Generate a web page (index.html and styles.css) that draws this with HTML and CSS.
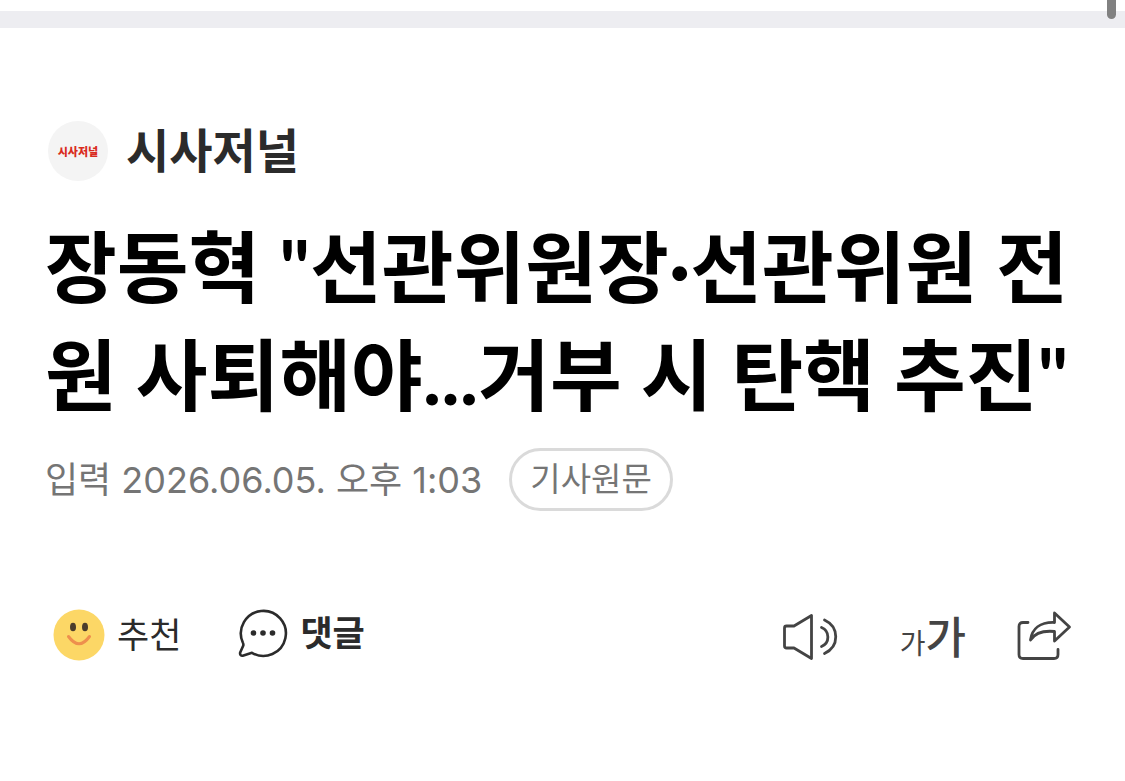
FILE: index.html
```html
<!DOCTYPE html>
<html lang="ko">
<head>
<meta charset="utf-8">
<meta name="viewport" content="width=device-width, initial-scale=1">
<title>시사저널</title>
<link rel="stylesheet" href="styles.css">
</head>
<body>
<div class="divider"></div>
<div class="scroll-thumb"></div>
<main class="article">
  <a class="press" href="#">
    <span class="press-logo">시사저널</span>
    <span class="press-name">시사저널</span>
  </a>
  <h1 class="headline">장동혁 "선관위원장·선관위원 전원 사퇴해야...거부 시 탄핵 추진"</h1>
  <div class="meta">
    <span class="date">입력 2026.06.05. 오후 1:03</span>
    <a class="origin" href="#">기사원문</a>
  </div>
  <div class="toolbar">
    <button class="tool like" type="button">
      <svg width="52" height="52" viewBox="0 0 52 52" aria-hidden="true">
        <circle cx="26" cy="26" r="25.5" fill="#fcd766"/>
        <ellipse cx="20" cy="18" rx="3" ry="4.3" fill="#4b3d2c"/>
        <ellipse cx="32" cy="18" rx="3" ry="4.3" fill="#4b3d2c"/>
        <path d="M15.500 27.500Q26 42 36.500 27.500" fill="none" stroke="#ee8f4d" stroke-width="3" stroke-linecap="round"/>
      </svg>
      <span class="tool-label">추천</span>
    </button>
    <button class="tool comment" type="button">
      <svg width="50" height="50" viewBox="0 0 50 50" aria-hidden="true">
        <path d="M4.800 34.500A22.500 22.500 0 1 1 14 44.800L5.500 47.500C3 48.300 1.500 46.500 2.300 44.300L5.300 37.500Q5.600 36 4.800 34.500Z" fill="none" stroke="#2b2b2b" stroke-width="2.600" stroke-linejoin="round"/>
        <circle cx="15.500" cy="25" r="2.800" fill="#2b2b2b"/>
        <circle cx="25" cy="25" r="2.800" fill="#2b2b2b"/>
        <circle cx="34.500" cy="25" r="2.800" fill="#2b2b2b"/>
      </svg>
      <span class="tool-label">댓글</span>
    </button>
    <div class="utils">
      <button class="tool listen" type="button" aria-label="음성으로 듣기">
        <svg width="56" height="48" viewBox="0 0 56 48" fill="none" stroke="#444" stroke-width="2.800" stroke-linecap="round" stroke-linejoin="round" aria-hidden="true">
          <path d="M29.500 2.500V45.500L12 35H4.500Q2.500 35 2.500 33V15Q2.500 13 4.500 13H12Z"/>
          <path d="M39.500 14.500C48 18 48 30 39.500 33.500"/>
          <path d="M42.500 7C57.500 14 57.500 33.500 42.500 40.500"/>
        </svg>
      </button>
      <button class="tool fontsize" type="button" aria-label="글자 크기 변경">
        <span class="ga-small">가</span><span class="ga-large">가</span>
      </button>
      <button class="tool share" type="button" aria-label="공유하기">
        <svg width="56" height="50" viewBox="0 0 56 50" fill="none" stroke="#444" stroke-width="2.800" stroke-linecap="round" stroke-linejoin="round" aria-hidden="true">
          <path d="M12 12.500H7Q3 12.500 3 16.500V44.500Q3 48.500 7 48.500H38Q42 48.500 42 44.500V39.500"/>
          <path d="M38.500 3L53.500 17L38.500 31V21.500C28 20.500 19 23 14.500 30C16 19 24 12 38.500 12.500Z"/>
        </svg>
      </button>
    </div>
  </div>
</main>
</body>
</html>
```
FILE: styles.css
```css
* {
  box-sizing: border-box;
}

body {
  margin: 0;
  padding-top: 11px;
  background: #fff;
  color: #2b2b2b;
  font-family: "Noto Sans CJK KR", sans-serif;
}

.divider {
  height: 17px;
  background: #ededf1;
}

.scroll-thumb {
  position: absolute;
  top: 0;
  right: 9px;
  width: 9px;
  height: 19px;
  border-radius: 0 0 5px 5px;
  background: #818181;
}

.article {
  padding: 92px 45px 0;
}

a {
  color: inherit;
  text-decoration: none;
}

.press {
  display: flex;
  align-items: flex-start;
  gap: 18px;
  padding-left: 3px;
}

.press-logo {
  display: flex;
  align-items: center;
  justify-content: center;
  width: 60px;
  height: 60px;
  margin-top: 1px;
  border-radius: 50%;
  background: #f4f4f4;
  color: #d92b20;
  font-size: 11px;
  font-weight: 900;
}

.press-name {
  font-size: 47px;
  font-weight: 700;
  line-height: 56px;
}

.headline {
  margin: 32px 0 0;
  color: #000;
  font-family: Lato, "Noto Sans CJK KR", sans-serif;
  font-size: 78px;
  font-weight: 700;
  line-height: 108px;
  word-break: break-all;
}

.meta {
  display: flex;
  align-items: center;
  gap: 27px;
  margin-top: 19px;
  color: #757575;
}

.date {
  font-family: Inter, "Noto Sans CJK KR", sans-serif;
  font-size: 36px;
  line-height: 62px;
}

.origin {
  padding: 0 18px 4px;
  border: 3px solid #dadada;
  border-radius: 32px;
  font-size: 33px;
  line-height: 53px;
}

.toolbar {
  display: flex;
  align-items: center;
  margin-top: 86px;
  padding: 0 8px;
}

.tool {
  display: flex;
  align-items: center;
  gap: 12px;
  padding: 0;
  border: 0;
  background: none;
  color: #2b2b2b;
  font: 400 35px/60px "Noto Sans CJK KR", sans-serif;
}

.tool-label {
  padding-bottom: 4px;
}

.comment {
  margin-left: 57px;
  padding-bottom: 4px;
  font-weight: 700;
}

.utils {
  display: flex;
  align-items: center;
  margin-left: auto;
}

.listen {
  padding-top: 4px;
}

.fontsize {
  gap: 0;
  align-items: baseline;
  margin-left: 62px;
  padding-top: 8px;
  color: #444;
}

.share {
  margin-left: 50px;
}

.ga-small {
  font-size: 28px;
}

.ga-large {
  font-size: 44px;
  font-weight: 500;
}
```
